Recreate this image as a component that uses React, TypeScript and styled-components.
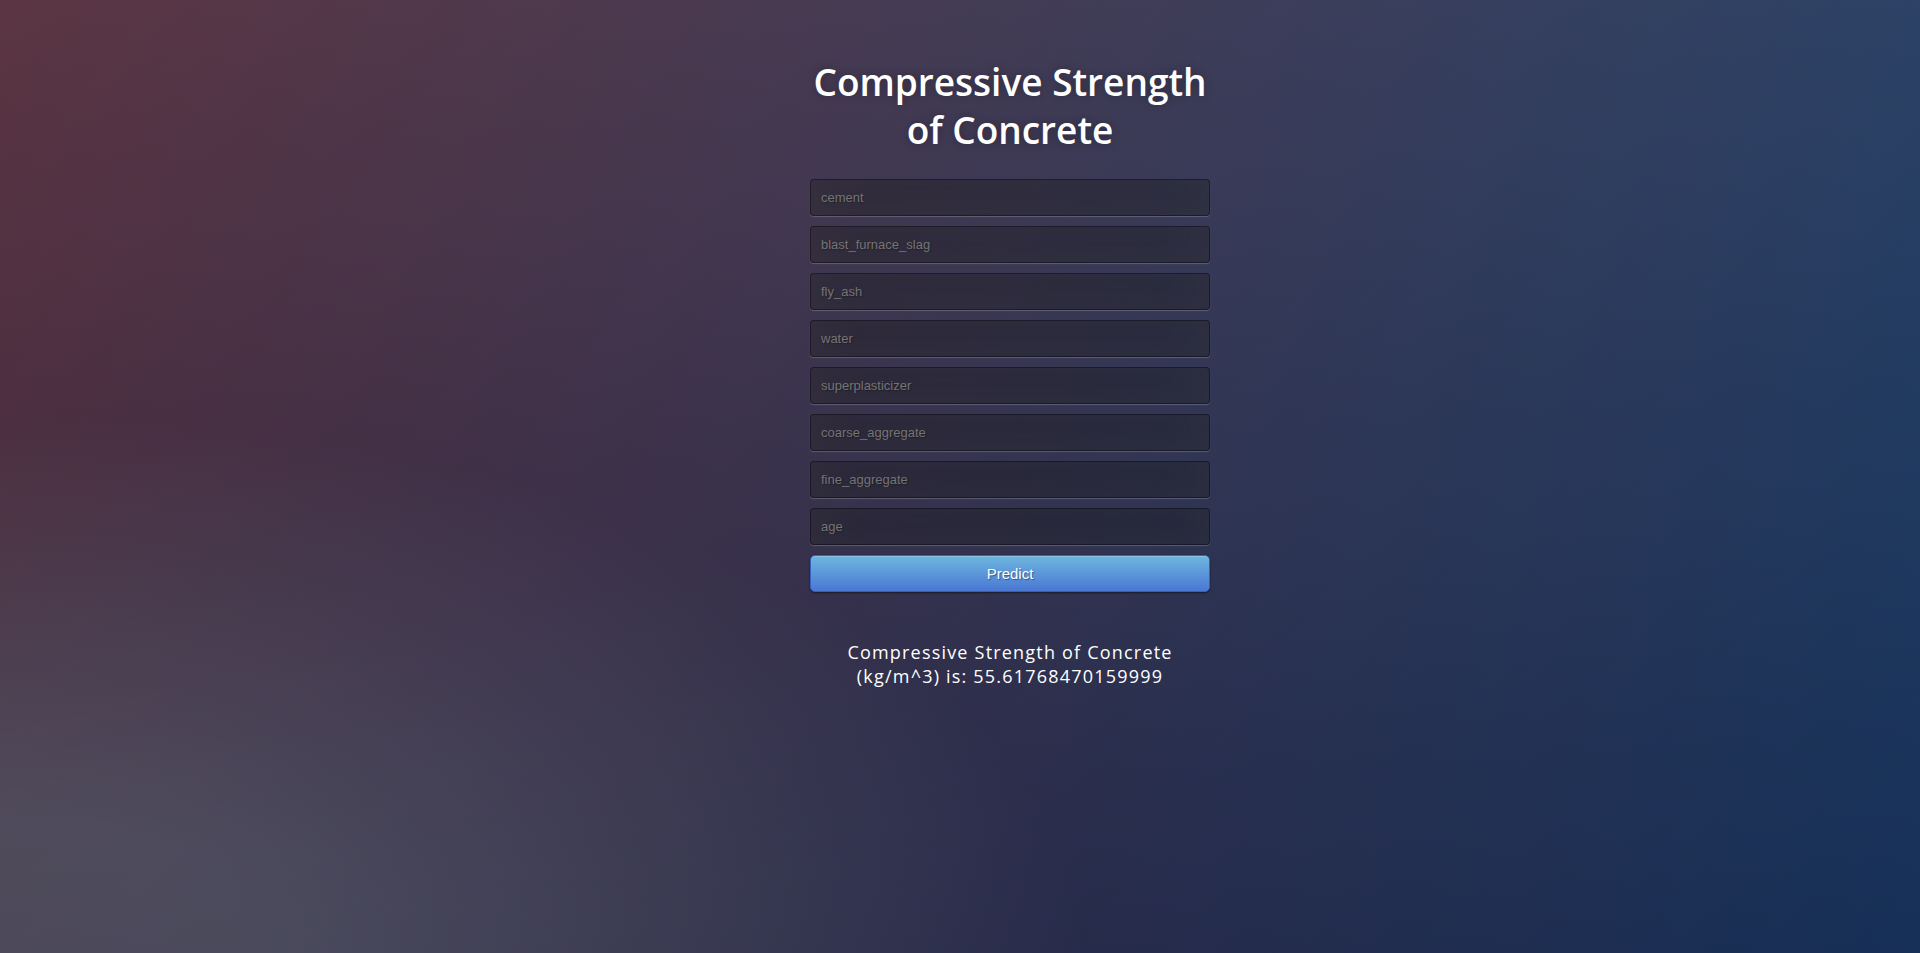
import React, { useState } from 'react';
import styled, { createGlobalStyle } from 'styled-components';

const GlobalStyle = createGlobalStyle`
  * {
    box-sizing: border-box;
  }

  html {
    width: 100%;
    height: 100%;
    overflow: hidden;
  }

  body {
    width: 100%;
    height: 100%;
    margin: 0;
    font-family: 'Open Sans', 'Noto Sans', sans-serif;
    background: #092756;
    background: radial-gradient(ellipse farthest-corner at 0% 100%, rgba(104, 128, 138, 0.4) 10%, rgba(138, 114, 76, 0) 40%),
      linear-gradient(to bottom, rgba(57, 173, 219, 0.25) 0%, rgba(42, 60, 87, 0.4) 100%),
      linear-gradient(135deg, #670d10 0%, #092756 100%);
  }

  #root {
    height: 100%;
  }
`;

const Page = styled.main({
  width: '100%',
  height: '100%',
  paddingTop: '58px'
});

const Login = styled.div({
  width: '400px',
  marginLeft: 'calc(50% - 150px)',
  display: 'flex',
  flexDirection: 'column'
});

const Title = styled.h1({
  margin: '0 0 25px',
  color: '#fff',
  fontSize: '37px',
  lineHeight: '48px',
  fontWeight: 600,
  textAlign: 'center',
  textShadow: '0 0 10px rgba(0, 0, 0, 0.3)'
});

const Form = styled.form({
  display: 'flex',
  flexDirection: 'column'
});

const Field = styled.input({
  width: '100%',
  marginBottom: '10px',
  background: 'rgba(0, 0, 0, 0.3)',
  outline: 'none',
  padding: '10px',
  fontFamily: "'Liberation Sans', Arial, sans-serif",
  fontSize: '13px',
  lineHeight: 'normal',
  color: '#fff',
  textShadow: '1px 1px 1px rgba(0, 0, 0, 0.3)',
  border: '1px solid rgba(0, 0, 0, 0.3)',
  borderRadius: '4px',
  boxShadow: 'inset 0 -5px 45px rgba(100, 100, 100, 0.2), 0 1px 1px rgba(255, 255, 255, 0.2)',
  '&::placeholder': {
    color: '#747474'
  }
});

const PredictButton = styled.button({
  display: 'block',
  width: '100%',
  padding: '9px 14px',
  fontFamily: "'Liberation Sans', Arial, sans-serif",
  fontSize: '15px',
  lineHeight: 'normal',
  color: '#fff',
  textAlign: 'center',
  cursor: 'pointer',
  backgroundColor: '#4a77d4',
  backgroundImage: 'linear-gradient(to bottom, #6eb6de, #4a77d4)',
  border: '1px solid #3762bc',
  borderRadius: '5px',
  textShadow: '1px 1px 1px rgba(0, 0, 0, 0.4)',
  boxShadow: 'inset 0 1px 0 rgba(255, 255, 255, 0.2), 0 1px 2px rgba(0, 0, 0, 0.5)'
});

const Result = styled.p({
  margin: '48px 0 0',
  color: '#fff',
  fontSize: '18px',
  lineHeight: '24px',
  fontWeight: 500,
  letterSpacing: '1.2px',
  textAlign: 'center'
});

const fields = [
  'cement',
  'blast_furnace_slag',
  'fly_ash',
  'water',
  'superplasticizer',
  'coarse_aggregate',
  'fine_aggregate',
  'age'
];

export default function App() {
  const [values, setValues] = useState<Record<string, string>>({});

  return (
    <Page>
      <GlobalStyle />
      <Login>
        <Title>Compressive Strength of Concrete</Title>
        <Form onSubmit={(e) => e.preventDefault()}>
          {fields.map((name) => (
            <Field
              key={name}
              type='text'
              name={name}
              placeholder={name}
              value={values[name] || ''}
              onChange={(e) => setValues({ ...values, [name]: e.currentTarget.value })}
            />
          ))}
          <PredictButton type='submit'>Predict</PredictButton>
        </Form>
        <Result>Compressive Strength of Concrete (kg/m^3) is: 55.61768470159999</Result>
      </Login>
    </Page>
  );
}
